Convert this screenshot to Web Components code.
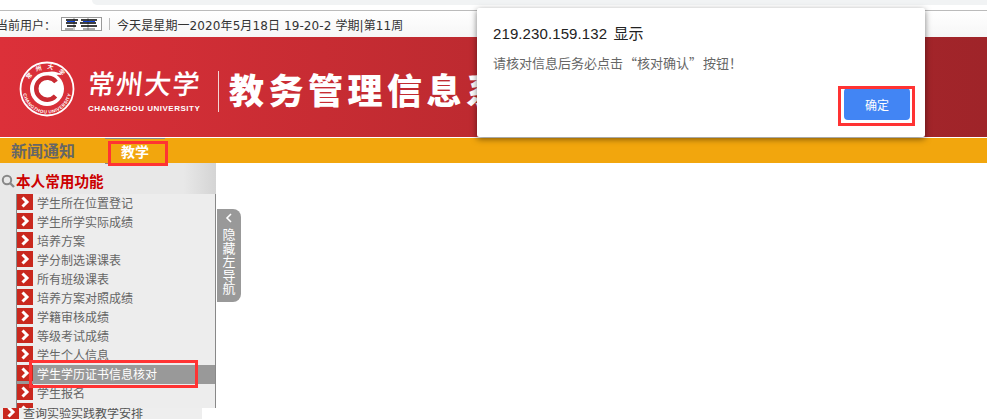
<!DOCTYPE html>
<html lang="zh">
<head>
<meta charset="utf-8">
<title>教务管理信息系统</title>
<style>
html, body { margin: 0; padding: 0; background: #fff; }
body { width: 987px; height: 419px; overflow: hidden; position: relative; font-family: "DejaVu Sans", "Noto Sans CJK SC", sans-serif; font-size: 12px; }
</style>
</head>
<body>
<browser-strip></browser-strip>
<top-bar></top-bar>
<site-banner></site-banner>
<nav-bar></nav-bar>
<main-area>
    <side-menu>
        <menu-item>学生所在位置登记</menu-item>
        <menu-item>学生所学实际成绩</menu-item>
        <menu-item>培养方案</menu-item>
        <menu-item>学分制选课课表</menu-item>
        <menu-item>所有班级课表</menu-item>
        <menu-item>培养方案对照成绩</menu-item>
        <menu-item>学籍审核成绩</menu-item>
        <menu-item>等级考试成绩</menu-item>
        <menu-item>学生个人信息</menu-item>
        <menu-item active>学生学历证书信息核对</menu-item>
        <menu-item>学生报名</menu-item>
        <menu-item></menu-item>
        <menu-item>查询实验实践教学安排</menu-item>
    </side-menu>
    <hide-tab></hide-tab>
</main-area>
<alert-box></alert-box>
<red-mark style="left:29px;top:360px;width:163px;height:22px"></red-mark>
<red-mark style="left:108px;top:141px;width:54px;height:19px"></red-mark>

<script>
const FONT = '"DejaVu Sans", "Noto Sans CJK SC", sans-serif'
const CJK = '"Noto Sans CJK SC", sans-serif'
const ARROW = `<svg width="16" height="16" viewBox="0 0 16 16"><path d="M5.5 3.5 L10 8 L5.5 12.5" fill="none" stroke="#fff" stroke-width="3"/></svg>`

class Base extends HTMLElement {
    constructor(html) {
        super()
        this.attachShadow({ mode: 'open' })
        this.shadowRoot.innerHTML = html
    }
}

class BrowserStrip extends Base {
    constructor() {
        super(`
        <style>
        :host { display: block; height: 11px; box-sizing: border-box; border-bottom: 1px solid #bbb; background: #fff; }
        div { height: 5px; margin-left: 92px; background: #f1f3f4; border-bottom-left-radius: 6px; }
        </style>
        <div></div>`)
    }
}

class TopBar extends Base {
    constructor() {
        super(`
        <style>
        :host { display: flex; align-items: center; height: 26px; background: linear-gradient(#fff, #f6f6f6); color: #333; font: 12px ${FONT}; white-space: nowrap; overflow: hidden; }
        .user { margin-left: -4px; width: 65px; }
        .name { display: block; width: 41px; height: 14px; }
        .sep { width: 1px; height: 12px; background: #bbb; margin: 0 7px 0 7px; }
        .today { letter-spacing: .1px; }
        </style>
        <span class="user">当前用户：</span>
        <svg class="name" viewBox="0 0 41 14">
            <rect x=".5" y=".5" width="40" height="13" fill="#fff" stroke="#999"/>
            <path d="M13 0V14M27 0V14" stroke="#999"/>
            <path d="M5 3H17M20 3H36M5 6H16M19 6H35M6 9H15M20 9H36" stroke="#000" stroke-width="1.500"/>
            <path d="M6 4.500H14M22 4.500H34" stroke="#1144dd"/>
            <path d="M4 12H12M22 12H34" stroke="#555"/>
        </svg>
        <span class="sep"></span>
        <span class="today">今天是星期一2020年5月18日 19-20-2 学期|第11周</span>`)
    }
}

class SiteBanner extends Base {
    constructor() {
        super(`
        <style>
        :host { display: flex; align-items: flex-start; height: 100px; background: linear-gradient(90deg, #dc3039 0, #bd2a30 480px, #9f2429 987px); color: #fff; font-family: ${CJK}; overflow: hidden; box-sizing: border-box; padding: 24px 0 0 19px; }
        svg { flex: none; display: block; }
        .name { flex: none; margin-left: 13px; width: 112px; margin-top: 3px; }
        .cn { font-size: 27px; line-height: 38px; letter-spacing: 1.2px; font-weight: 500; white-space: nowrap; transform: skewX(-6deg); }
        .en { font: bold 8px/10px "Liberation Sans", sans-serif; letter-spacing: .5px; white-space: nowrap; margin-top: 2px; }
        .bar { flex: none; width: 1px; height: 41px; background: #f3d5d5; margin: 10px 10px 0 18px; }
        .title { font-size: 35px; line-height: 40px; font-weight: 900; letter-spacing: 4.5px; white-space: nowrap; margin: 8px 0 0 0; }
        </style>
        <svg width="56" height="56" viewBox="0 0 56 56">
            <defs>
                <path id="top" d="M8 28 A20 20 0 0 1 48 28"/>
                <path id="bot" d="M3.5 28 A24.500 24.500 0 0 0 52.500 28"/>
            </defs>
            <circle cx="28" cy="28" r="26.500" fill="none" stroke="#fff" stroke-width="1.800"/>
            <circle cx="28" cy="28" r="17" fill="#fff"/>
            <path d="M37 21 A11 11 0 1 0 36.500 35" fill="none" stroke="#c92a32" stroke-width="4.500"/>
            <path d="M28 11 Q37 9 43 14 Q38 13 33 15 Z" fill="#fff"/>
            <text font-size="6" fill="#fff" font-weight="700"><textPath href="#top" startOffset="50%" text-anchor="middle" letter-spacing="5">常州大学</textPath></text>
            <text font-size="4.600" fill="#fff" font-weight="700" font-family="Liberation Sans"><textPath href="#bot" startOffset="50%" text-anchor="middle" letter-spacing=".4">CHANGZHOU UNIVERSITY</textPath></text>
        </svg>
        <div class="name">
            <div class="cn">常州大学</div>
            <div class="en">CHANGZHOU UNIVERSITY</div>
        </div>
        <div class="bar"></div>
        <div class="title">教务管理信息系统</div>`)
    }
}

class NavBar extends Base {
    constructor() {
        super(`
        <style>
        :host { display: flex; box-sizing: border-box; margin-top: 1px; background: #f2a60d; font-family: ${CJK}; height: 25px; position: relative; }
        .news { font-size: 16px; line-height: 25px; font-weight: 700; color: #666; margin-left: 11px; width: 94px; }
        .tab { width: 60px; height: 26px; box-sizing: border-box; border-top: 1px solid #888; border-bottom: 1px solid #888; color: #fff; font-size: 14px; font-weight: 700; line-height: 24px; padding-left: 16px; }
        </style>
        <span class="news">新闻通知</span><span class="tab">教学</span>`)
    }
}

class MainArea extends Base {
    constructor() {
        super(`
        <style>
        :host { display: flex; align-items: flex-start; height: 256px; overflow: hidden; }
        </style>
        <slot></slot>`)
    }
}

class SideMenu extends Base {
    constructor() {
        super(`
        <style>
        :host { display: block; flex: none; width: 216px; height: 256px; font-family: ${CJK}; }
        .head { height: 31px; box-sizing: border-box; background: linear-gradient(90deg, #e8e8e8 85%, #d4d4d4 100%); display: flex; align-items: center; padding: 4px 0 0 1px; color: #c00; font-size: 14.6px; font-weight: 700; }
        svg { margin-right: 1px; }
        .wrap { background: #e8e8e8; height: 214px; padding-left: 16px; position: relative; z-index: 1; }
        .list { height: 214px; box-sizing: border-box; border-left: 1px solid #888; border-right: 1px solid #888; background: #ededed; overflow: hidden; }
        .rest { background: #eee; width: 202px; height: 15px; padding-left: 3px; margin-top: -4px; overflow: hidden; box-sizing: border-box; }
        </style>
        <div class="head">
            <svg width="14" height="14" viewBox="0 0 14 14"><circle cx="6" cy="6" r="4.200" fill="none" stroke="#888" stroke-width="2"/><path d="M9 9 L13 13" stroke="#888" stroke-width="2.400"/></svg>
            本人常用功能
        </div>
        <div class="wrap"><div class="list"><slot></slot></div></div>
        <div class="rest"><slot name="rest"></slot></div>`)
    }

    connectedCallback() {
        // the last entry sits outside the bordered list
        const items = this.querySelectorAll('menu-item')
        if(items.length) {
            items[items.length - 1].setAttribute('slot', 'rest')
        }
    }
}

class MenuItem extends Base {
    constructor() {
        super(`
        <style>
        :host { display: flex; align-items: flex-start; height: 19px; color: #666; font: 12px/18px ${CJK}; white-space: nowrap; }
        :host([active]) { background: #999; color: #fff; }
        :host([slot=rest]) { color: #555; }
        .icon { flex: none; width: 16px; height: 16px; background: #c9281e; margin-right: 4px; }
        .icon svg { display: block; }
        </style>
        <div class="icon">${ARROW}</div><span><slot></slot></span>`)
    }
}

class HideTab extends Base {
    constructor() {
        super(`
        <style>
        :host { display: flex; flex-direction: column; align-items: center; flex: none; width: 24px; height: 93px; margin: 46px 0 0 1px; box-sizing: border-box; padding-top: 3px; background: #999; border-radius: 0 8px 8px 0; color: #fff; font: 13px/13.500px ${CJK}; }
        svg { margin-bottom: 3px; display: block; }
        span { width: 13px; text-align: center; }
        </style>
        <svg width="10" height="12" viewBox="0 0 10 12"><path d="M7 2 L3 6 L7 10" fill="none" stroke="#fff" stroke-width="1.600"/></svg>
        <span>隐藏左导航</span>`)
    }
}

class AlertBox extends Base {
    constructor() {
        super(`
        <style>
        :host { position: absolute; left: 477px; top: 8px; width: 448px; height: 129px; box-sizing: border-box; padding: 16px 16px 0; background: #fff; border-radius: 2px; box-shadow: 0 2px 6px rgba(0,0,0,.5); display: flex; flex-direction: column; z-index: 2; font-family: "Liberation Sans", ${CJK}; }
        .title { font-size: 15px; line-height: 20px; color: #222; letter-spacing: .1px; word-spacing: 2px; }
        .msg { font-size: 13px; line-height: 18px; margin-top: 10px; color: #666; font-family: ${CJK}; }
        .q { display: inline-block; width: 14px; }
        .q.open { text-align: right; }
        .foot { display: flex; justify-content: flex-end; margin: 16px -1px 0 0; }
        button { width: 66px; height: 32px; border: 0; border-radius: 4px; background: #4285f4; color: #fff; font: 12px ${CJK}; padding: 0; }
        .mark { position: absolute; left: 361px; top: 78px; width: 71px; height: 34px; border: 3px solid #f33; }
        </style>
        <div class="title">219.230.159.132 显示</div>
        <div class="msg">请核对信息后务必点击<span class="q open">“</span>核对确认<span class="q">”</span>按钮！</div>
        <div class="foot"><button>确定</button></div>
        <div class="mark"></div>`)
    }
}

class RedMark extends Base {
    constructor() {
        super(`
        <style>
        :host { position: absolute; z-index: 3; border: 3px solid #f33; display: block; }
        </style>`)
    }
}

customElements.define('browser-strip', BrowserStrip)
customElements.define('top-bar', TopBar)
customElements.define('site-banner', SiteBanner)
customElements.define('nav-bar', NavBar)
customElements.define('main-area', MainArea)
customElements.define('side-menu', SideMenu)
customElements.define('menu-item', MenuItem)
customElements.define('hide-tab', HideTab)
customElements.define('alert-box', AlertBox)
customElements.define('red-mark', RedMark)
</script>
</body>
</html>
